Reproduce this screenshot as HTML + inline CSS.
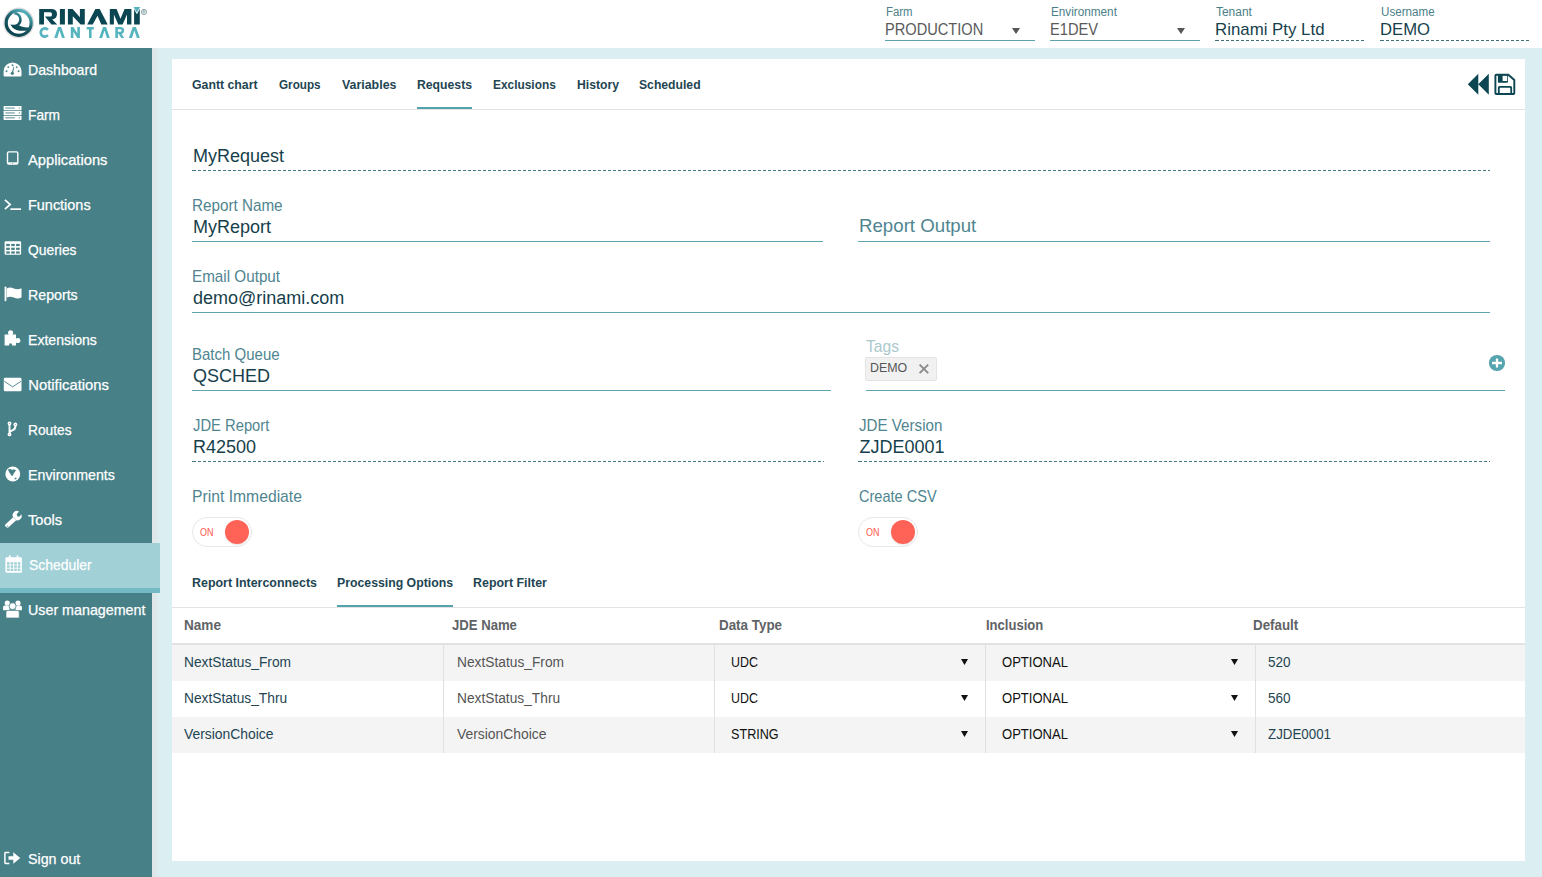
<!DOCTYPE html>
<html><head><meta charset="utf-8">
<style>
*{box-sizing:border-box;margin:0;padding:0}
html,body{width:1542px;height:877px;overflow:hidden;background:#fff;font-family:"Liberation Sans",sans-serif}
.a{position:absolute;white-space:nowrap;line-height:normal}
</style></head><body>
<svg class="a" style="left:0;top:0" width="160" height="48" viewBox="0 0 160 48">
 <defs>
  <linearGradient id="rg" x1="0.75" y1="0" x2="0.25" y2="0.9">
   <stop offset="0" stop-color="#5cb8c3"/><stop offset="0.25" stop-color="#3a8c97"/><stop offset="0.5" stop-color="#1a5d68"/><stop offset="1" stop-color="#0c4551"/>
  </linearGradient>
 </defs>
 <circle cx="18.7" cy="22.9" r="15.4" fill="#e2dede"/>
 <circle cx="18.7" cy="22.9" r="10.9" fill="#fff"/>
 <circle cx="18.7" cy="22.9" r="12.5" fill="none" stroke="url(#rg)" stroke-width="3.2"/>
 <path d="M15.6 12 A7.8 7.8 0 0 1 19 25.5 Q24 27.8 28.8 27.3 L28.5 30.2 Q22 31.6 16.5 29.9 Q12 28.2 10.4 24.2 Q12.5 25 14 24.7 A5.2 5.2 0 0 0 19.2 19.5 A5.2 5.2 0 0 0 14 14.3 Q14.3 12.8 15.6 12 Z" fill="url(#rg)"/>
 <g fill="#0c4652">
  <path d="M39.2 24.5 V9 H51 Q57 9 57 14 Q57 18.5 52.3 19.6 L57.2 24.5 H51.4 L45 16.6 H50.3 Q52 16.6 52 14.4 Q52 12.3 50.3 12.3 H44 V24.5 Z"/>
  <rect x="59.9" y="9" width="5" height="15.5"/>
  <path d="M67.9 24.5 V9 H72.6 L79.9 17.3 V9 H84.8 V24.5 H80.6 L72.8 16.2 V24.5 Z"/>
  <path d="M87.2 24.5 L95.4 9 H99.7 L107.7 24.5 H101.3 L97.5 15.7 L92.7 24.5 Z"/>
  <path d="M109.8 24.5 V9 H116.6 L120.5 18.7 L124.6 9 H131.4 V24.5 H127 V14.5 L122.6 24.5 H118.3 L113.9 14.5 V24.5 Z"/>
  <rect x="134.1" y="9" width="5.7" height="15.5"/>
 </g>
 <path d="M132.5 6.5 H141.3 L136.9 14.2 Z" fill="#fff"/>
 <path d="M133.6 7 H140.2 L136.9 12.6 Z" fill="#55b3be"/>
 <circle cx="144" cy="12" r="2.6" fill="none" stroke="#6d8f95" stroke-width="0.8"/><path d="M143.1 13.6 V10.5 H144.4 Q145.2 10.5 145.2 11.3 Q145.2 12.1 144.4 12.1 H143.1 M144.2 12.1 L145.2 13.6" fill="none" stroke="#6d8f95" stroke-width="0.6"/>
 <g fill="#56b4bf">
  <path d="M47.9 29.8 A4.1 4.1 0 1 0 47.9 35.2" fill="none" stroke="#56b4bf" stroke-width="2.6"/>
  <path d="M54.2 37.9 L58 27.1 H61.2 L64.9 37.9 H62 L59.6 30.5 L57.2 37.9 Z"/>
  <path d="M70.8 37.9 V27.1 H73.4 L77.3 33.2 V27.1 H79.9 V37.9 H77.3 L73.4 31.8 V37.9 Z"/>
  <path d="M86.7 27.1 H93.8 V29.6 H91.6 V37.9 H89 V29.6 H86.7 Z"/>
  <path d="M99.2 37.9 L103 27.1 H106.1 L109.8 37.9 H106.9 L104.5 30.5 L102.1 37.9 Z"/>
  <path fill-rule="evenodd" d="M115.3 37.9 V27.1 H120.5 Q124.2 27.1 124.2 30.6 Q124.2 33.2 121.6 33.9 L124.2 37.9 H121.2 L118.6 33.7 H117.9 V37.9 Z M117.9 29.3 H120.3 Q121.6 29.3 121.6 30.6 Q121.6 31.8 120.3 31.8 H117.9 Z"/>
  <path d="M128.9 37.9 L132.7 27.1 H135.9 L139.8 37.9 H136.9 L134.4 30.5 L132 37.9 Z"/>
 </g>
</svg>
<div class="a" style="left:885.70px;top:5.04px;font-size:12px;color:#4b8088;transform:scaleX(0.9464);transform-origin:0 0;">Farm</div>
<div class="a" style="left:884.70px;top:21.32px;font-size:16px;color:#5a5a5a;transform:scaleX(0.9140);transform-origin:0 0;">PRODUCTION</div>
<svg class="a" style="left:1012px;top:28px" width="8" height="6"><path d="M0 0 H8 L4.0 6 Z" fill="#555"/></svg>
<div class="a" style="left:885px;top:40px;width:150px;height:1px;background:#5fa3ad;"></div>
<div class="a" style="left:1050.70px;top:5.04px;font-size:12px;color:#4b8088;transform:scaleX(0.9785);transform-origin:0 0;">Environment</div>
<div class="a" style="left:1049.70px;top:21.32px;font-size:16px;color:#5a5a5a;transform:scaleX(0.9171);transform-origin:0 0;">E1DEV</div>
<svg class="a" style="left:1177px;top:28px" width="8" height="6"><path d="M0 0 H8 L4.0 6 Z" fill="#555"/></svg>
<div class="a" style="left:1050px;top:40px;width:150px;height:1px;background:#5fa3ad;"></div>
<div class="a" style="left:1215.70px;top:5.04px;font-size:12px;color:#4b8088;transform:scaleX(0.9958);transform-origin:0 0;">Tenant</div>
<div class="a" style="left:1215.40px;top:20.11px;font-size:17px;color:#173f4b;transform:scaleX(0.9905);transform-origin:0 0;">Rinami Pty Ltd</div>
<div class="a" style="left:1215px;top:40px;width:150px;height:1px;background:linear-gradient(#3f6f78,#3f6f78) 0 0/1px 1px no-repeat,repeating-linear-gradient(to right,#3f6f78 0,#3f6f78 3px,transparent 3px,transparent 5px) 1px 0/100% 1px repeat-x"></div>
<div class="a" style="left:1380.70px;top:5.04px;font-size:12px;color:#4b8088;transform:scaleX(0.9684);transform-origin:0 0;">Username</div>
<div class="a" style="left:1380.40px;top:20.11px;font-size:17px;color:#173f4b;transform:scaleX(0.9804);transform-origin:0 0;">DEMO</div>
<div class="a" style="left:1380px;top:40px;width:150px;height:1px;background:linear-gradient(#3f6f78,#3f6f78) 0 0/1px 1px no-repeat,repeating-linear-gradient(to right,#3f6f78 0,#3f6f78 3px,transparent 3px,transparent 5px) 1px 0/100% 1px repeat-x"></div>
<div class="a" style="left:152px;top:48px;width:1390px;height:829px;background:#dbeff2;"></div>
<div class="a" style="left:152px;top:48px;width:7px;height:829px;background:linear-gradient(to right,#dfe5e7,#dde9ec 70%,#dbeff2);"></div>
<div class="a" style="left:0px;top:48px;width:152px;height:829px;background:#478087;"></div>
<div class="a" style="left:0px;top:543px;width:160px;height:45px;background:#a1d0d6;"></div>
<div class="a" style="left:0px;top:588px;width:160px;height:5px;background:#74b9c3;"></div>
<div class="a" style="left:172px;top:59px;width:1353px;height:802px;background:#fff;"></div>
<div class="a" style="left:28.30px;top:61.70px;font-size:14.8px;color:#fff;transform:scaleX(0.9530);transform-origin:0 0;-webkit-text-stroke:0.25px #fff;">Dashboard</div>
<div class="a" style="left:28.30px;top:106.70px;font-size:14.8px;color:#fff;transform:scaleX(0.9291);transform-origin:0 0;-webkit-text-stroke:0.25px #fff;">Farm</div>
<div class="a" style="left:28.30px;top:151.70px;font-size:14.8px;color:#fff;transform:scaleX(0.9962);transform-origin:0 0;-webkit-text-stroke:0.25px #fff;">Applications</div>
<div class="a" style="left:28.30px;top:196.70px;font-size:14.8px;color:#fff;transform:scaleX(0.9758);transform-origin:0 0;-webkit-text-stroke:0.25px #fff;">Functions</div>
<div class="a" style="left:28.30px;top:241.70px;font-size:14.8px;color:#fff;transform:scaleX(0.9363);transform-origin:0 0;-webkit-text-stroke:0.25px #fff;">Queries</div>
<div class="a" style="left:28.30px;top:286.70px;font-size:14.8px;color:#fff;transform:scaleX(0.9595);transform-origin:0 0;-webkit-text-stroke:0.25px #fff;">Reports</div>
<div class="a" style="left:28.30px;top:331.70px;font-size:14.8px;color:#fff;transform:scaleX(0.9517);transform-origin:0 0;-webkit-text-stroke:0.25px #fff;">Extensions</div>
<div class="a" style="left:28.30px;top:376.70px;font-size:14.8px;color:#fff;transform:scaleX(1.0000);transform-origin:0 0;-webkit-text-stroke:0.25px #fff;">Notifications</div>
<div class="a" style="left:28.30px;top:421.70px;font-size:14.8px;color:#fff;transform:scaleX(0.9296);transform-origin:0 0;-webkit-text-stroke:0.25px #fff;">Routes</div>
<div class="a" style="left:28.30px;top:466.70px;font-size:14.8px;color:#fff;transform:scaleX(0.9602);transform-origin:0 0;-webkit-text-stroke:0.25px #fff;">Environments</div>
<div class="a" style="left:28.30px;top:511.70px;font-size:14.8px;color:#fff;transform:scaleX(0.9899);transform-origin:0 0;-webkit-text-stroke:0.25px #fff;">Tools</div>
<div class="a" style="left:29.30px;top:556.70px;font-size:14.8px;color:#fff;transform:scaleX(0.9407);transform-origin:0 0;-webkit-text-stroke:0.25px #fff;">Scheduler</div>
<div class="a" style="left:28.30px;top:601.70px;font-size:14.8px;color:#fff;transform:scaleX(0.9651);transform-origin:0 0;-webkit-text-stroke:0.25px #fff;">User management</div>
<div class="a" style="left:28.30px;top:851.20px;font-size:14.8px;color:#fff;transform:scaleX(0.9632);transform-origin:0 0;-webkit-text-stroke:0.25px #fff;">Sign out</div>
<svg class="a" style="left:0;top:0" width="30" height="877" viewBox="0 0 30 877">
 <g fill="#fff">
  <!-- dashboard -->
  <path d="M3.6 75.6 Q3.6 76.4 4.4 76.4 H20.7 Q21.5 76.4 21.5 75.6 V71.4 A8.95 9 0 0 0 3.6 71.4 Z"/>
  <!-- farm -->
  <rect x="3.6" y="105.9" width="17.9" height="4.2" rx="0.5"/>
  <rect x="3.6" y="110.8" width="17.9" height="4.2" rx="0.5"/>
  <rect x="3.6" y="115.7" width="17.9" height="4.2" rx="0.5"/>
  <!-- functions -->
  <rect x="10.4" y="208.3" width="10.6" height="1.7"/>
  <!-- queries -->
  <rect x="4.6" y="241.2" width="16.5" height="13.6" rx="1.2"/>
  <!-- reports -->
  <rect x="4.6" y="286.5" width="1.8" height="14.7" rx="0.8"/>
  <path d="M6.6 288.4 Q10 286.6 13.8 288.4 Q17.6 290 21.5 288.2 V297.6 Q17.6 299.4 13.8 297.6 Q10 296 6.6 297.6 Z"/>
  <!-- extensions -->
  <path d="M4.6 334.5 H8.9 Q8 333.9 8 332.8 A2.6 2.6 0 0 1 13.2 332.8 Q13.2 333.9 12.3 334.5 H16 V338.6 Q16.6 338 17.9 338 A2.5 2.5 0 0 1 17.9 343 Q16.6 343 16 342.4 V345.6 H12.1 Q12.3 343.2 10.6 343.2 Q8.9 343.2 9.1 345.6 H4.6 Z"/>
  <!-- notifications -->
  <rect x="3.8" y="377.7" width="17.7" height="13.5" rx="1.3"/>
  <!-- environments -->
  <circle cx="12.8" cy="474" r="7.4"/>
  <!-- tools -->
  <path d="M5.6 524.3 L13.2 517.3 L16.2 520.2 L8.6 527.3 Q7.4 528.2 6.2 527.1 L5.3 526.2 Q4.5 525.2 5.6 524.3 Z"/>
  <path d="M13.2 517.3 A4.3 4.3 0 0 1 19 511.4 L16.8 513.9 L17.1 516.3 L19.4 516.7 L21.3 514.2 A4.3 4.3 0 0 1 16.2 520.2 Z"/>
  <!-- scheduler -->
  <rect x="5.4" y="557.3" width="16.5" height="15.5" rx="1.2"/>
  <rect x="8.8" y="555.2" width="1.9" height="4" rx="0.9"/>
  <rect x="16.6" y="555.2" width="1.9" height="4" rx="0.9"/>
  <!-- users -->
  <circle cx="7.3" cy="603" r="2.6"/>
  <circle cx="18" cy="603" r="2.6"/>
  <path d="M3.1 610.2 V607.3 Q3.1 605.6 4.8 605.6 H9.5 V610.2 Z"/>
  <path d="M21.9 610.2 V607.3 Q21.9 605.6 20.2 605.6 H15.5 V610.2 Z"/>
  <circle cx="12.6" cy="606.2" r="3.5" stroke="#478087" stroke-width="0.8"/>
  <path d="M6 617.9 V612.2 Q6 610.4 7.8 610.4 H17.4 Q19.2 610.4 19.2 612.2 V617.9 Z" stroke="#478087" stroke-width="0.6"/>
  <!-- sign out -->
  <path d="M8.5 856.3 H13.3 V852.2 L20.2 858 L13.3 863.8 V859.7 H8.5 Z"/>
 </g>
 <g fill="#478087">
  <circle cx="6.5" cy="71.2" r="0.95"/><circle cx="8.3" cy="67.1" r="0.95"/><circle cx="12.55" cy="65.3" r="0.95"/><circle cx="16.8" cy="67.1" r="0.95"/><circle cx="18.6" cy="71.2" r="0.95"/>
  <circle cx="12.3" cy="73.3" r="1.6"/>
  <path d="M11.6 73 L13.6 66.8 L14.2 67 L13 73.5 Z"/>
  <rect x="5.3" y="107.6" width="9.5" height="0.9"/><rect x="5.3" y="112.5" width="9.5" height="0.9"/><rect x="5.3" y="117.4" width="9.5" height="0.9"/>
  <circle cx="19.3" cy="108" r="0.6"/><circle cx="19.3" cy="112.9" r="0.6"/><circle cx="19.3" cy="117.8" r="0.6"/>
  <rect x="6.2" y="243.9" width="3.6" height="2.2"/><rect x="11.2" y="243.9" width="3.6" height="2.2"/><rect x="16.1" y="243.9" width="3.6" height="2.2"/>
  <rect x="6.2" y="247.7" width="3.6" height="2.2"/><rect x="11.2" y="247.7" width="3.6" height="2.2"/><rect x="16.1" y="247.7" width="3.6" height="2.2"/>
  <rect x="6.2" y="251.4" width="3.6" height="2.2"/><rect x="11.2" y="251.4" width="3.6" height="2.2"/><rect x="16.1" y="251.4" width="3.6" height="2.2"/>
  <path d="M7.9 469.6 Q9.5 468.8 11.3 469.3 L12.3 470.3 L13.3 469.2 Q14.8 469.6 16.1 470 L14.5 472.5 Q13.5 473.5 13.2 474.8 L12.2 476.3 Q10.8 474.5 9.3 472.5 Z"/>
  <path d="M14.3 478.9 L15.2 477.5 L17 478.4 L15 479.6 Z"/>
  <circle cx="7.7" cy="526.1" r="0.6"/>
  <rect x="7.0" y="562.2" width="2.6" height="2.4" fill="#a1d0d6"/><rect x="10.6" y="562.2" width="2.6" height="2.4" fill="#a1d0d6"/><rect x="14.2" y="562.2" width="2.6" height="2.4" fill="#a1d0d6"/><rect x="17.8" y="562.2" width="2.6" height="2.4" fill="#a1d0d6"/><rect x="7.0" y="565.4" width="2.6" height="2.4" fill="#a1d0d6"/><rect x="10.6" y="565.4" width="2.6" height="2.4" fill="#a1d0d6"/><rect x="14.2" y="565.4" width="2.6" height="2.4" fill="#a1d0d6"/><rect x="17.8" y="565.4" width="2.6" height="2.4" fill="#a1d0d6"/><rect x="7.0" y="568.6" width="2.6" height="2.4" fill="#a1d0d6"/><rect x="10.6" y="568.6" width="2.6" height="2.4" fill="#a1d0d6"/><rect x="14.2" y="568.6" width="2.6" height="2.4" fill="#a1d0d6"/><rect x="17.8" y="568.6" width="2.6" height="2.4" fill="#a1d0d6"/>
 </g>
 <g fill="none" stroke="#fff">
  <rect x="7.5" y="151.9" width="10.3" height="12.2" rx="1.3" stroke-width="1.4"/>
  <path d="M4.9 199.9 L10.2 204.5 L4.9 209.1" stroke-width="1.7"/>
  <path d="M4.3 381.3 L12.65 386.8 L21 381.3" stroke="#478087" stroke-width="0.9"/>
  <path d="M9.5 425 V433 M15.4 426 Q15.4 429.6 12.4 430.4 Q9.5 431.2 9.5 433" stroke-width="1.9"/>
  <circle cx="9.5" cy="423.5" r="1.9" fill="#fff" stroke="none"/><circle cx="15.4" cy="424.5" r="1.9" fill="#fff" stroke="none"/><circle cx="9.5" cy="434.4" r="1.9" fill="#fff" stroke="none"/>
  <circle cx="9.5" cy="423.5" r="0.45" fill="#7a5a6a" stroke="none"/><circle cx="15.4" cy="424.5" r="0.45" fill="#7a5a6a" stroke="none"/><circle cx="9.5" cy="434.4" r="0.45" fill="#7a5a6a" stroke="none"/>
  <path d="M9.3 852.5 H5.6 Q4.9 852.5 4.9 853.2 V862.8 Q4.9 863.5 5.6 863.5 H9.3" stroke-width="1.5"/>
 </g>
 <rect x="7.5" y="162.3" width="10.3" height="1.8" fill="#fff"/>
 <circle cx="12.65" cy="163.2" r="0.5" fill="#478087"/>
 <circle cx="9.6" cy="345.6" r="0" fill="#478087"/>
</svg>

<div class="a" style="left:192.40px;top:77.31px;font-size:12.8px;color:#1e4552;font-weight:bold;transform:scaleX(0.9605);transform-origin:0 0;">Gantt chart</div>
<div class="a" style="left:279.00px;top:77.31px;font-size:12.8px;color:#1e4552;font-weight:bold;transform:scaleX(0.9143);transform-origin:0 0;">Groups</div>
<div class="a" style="left:341.60px;top:77.31px;font-size:12.8px;color:#1e4552;font-weight:bold;transform:scaleX(0.9680);transform-origin:0 0;">Variables</div>
<div class="a" style="left:417.00px;top:77.31px;font-size:12.8px;color:#1e4552;font-weight:bold;transform:scaleX(0.9549);transform-origin:0 0;">Requests</div>
<div class="a" style="left:492.80px;top:77.31px;font-size:12.8px;color:#1e4552;font-weight:bold;transform:scaleX(0.9290);transform-origin:0 0;">Exclusions</div>
<div class="a" style="left:576.70px;top:77.31px;font-size:12.8px;color:#1e4552;font-weight:bold;transform:scaleX(0.9546);transform-origin:0 0;">History</div>
<div class="a" style="left:639.40px;top:77.31px;font-size:12.8px;color:#1e4552;font-weight:bold;transform:scaleX(0.9514);transform-origin:0 0;">Scheduled</div>
<div class="a" style="left:172px;top:109px;width:1353px;height:1px;background:#e3e3e3;"></div>
<div class="a" style="left:417px;top:107px;width:55px;height:2px;background:#53a2ac;"></div>
<svg class="a" style="left:0;top:0" width="1542" height="120" viewBox="0 0 1542 120">
 <path d="M1467.8 84.3 L1478.3 73.8 V94.8 Z M1478.3 84.3 L1488.8 73.8 V94.8 Z" fill="#0c4652"/>
 <path d="M1495.4 75.6 Q1495.4 74.8 1496.2 74.8 H1508.3 L1514.3 80 V93.2 Q1514.3 94 1513.5 94 H1496.2 Q1495.4 94 1495.4 93.2 Z" fill="none" stroke="#0c4652" stroke-width="1.9"/>
 <path d="M1497.9 74.5 H1507.9 V82 Q1507.9 82.8 1507.1 82.8 H1498.7 Q1497.9 82.8 1497.9 82 Z M1502.6 75.6 V81 H1507.1 V75.6 Z" fill="#0c4652" fill-rule="evenodd"/>
 <path d="M1498.8 94 V87.6 Q1498.8 86.8 1499.6 86.8 H1510.4 Q1511.2 86.8 1511.2 87.6 V94" fill="none" stroke="#0c4652" stroke-width="1.8"/>
</svg>

<div class="a" style="left:193.00px;top:145.90px;font-size:18px;color:#173f4b;">MyRequest</div>
<div class="a" style="left:192px;top:170px;width:1298px;height:1px;background:linear-gradient(#3f7a84,#3f7a84) 0 0/1px 1px no-repeat,repeating-linear-gradient(to right,#3f7a84 0,#3f7a84 3px,transparent 3px,transparent 5px) 1px 0/100% 1px repeat-x"></div>
<div class="a" style="left:192.30px;top:195.87px;font-size:16.6px;color:#4f8590;transform:scaleX(0.9179);transform-origin:0 0;">Report Name</div>
<div class="a" style="left:193.00px;top:216.90px;font-size:18px;color:#173f4b;">MyReport</div>
<div class="a" style="left:192px;top:241px;width:631px;height:1px;background:#5fa5af;"></div>
<div class="a" style="left:858.50px;top:215.40px;font-size:19px;color:#4f8590;transform:scaleX(0.9828);transform-origin:0 0;">Report Output</div>
<div class="a" style="left:858px;top:241px;width:632px;height:1px;background:#5fa5af;"></div>
<div class="a" style="left:192.20px;top:266.87px;font-size:16.6px;color:#4f8590;transform:scaleX(0.9182);transform-origin:0 0;">Email Output</div>
<div class="a" style="left:193.00px;top:288.10px;font-size:18px;color:#173f4b;">demo@rinami.com</div>
<div class="a" style="left:192px;top:312px;width:1298px;height:1px;background:#5fa5af;"></div>
<div class="a" style="left:192.20px;top:345.17px;font-size:16.6px;color:#4f8590;transform:scaleX(0.9040);transform-origin:0 0;">Batch Queue</div>
<div class="a" style="left:193.00px;top:366.00px;font-size:18px;color:#173f4b;">QSCHED</div>
<div class="a" style="left:192px;top:390px;width:639px;height:1px;background:#5fa5af;"></div>
<div class="a" style="left:865.50px;top:336.97px;font-size:16.6px;color:#a9c8cd;transform:scaleX(0.9415);transform-origin:0 0;">Tags</div>
<div class="a" style="left:865px;top:357px;width:72px;height:24px;background:#f1f1f1;border:1px solid #e4e4e4;border-radius:2px"></div>
<div class="a" style="left:870.00px;top:361.48px;font-size:12.5px;color:#555;transform:scaleX(0.9920);transform-origin:0 0;">DEMO</div>
<svg class="a" style="left:918px;top:363px" width="12" height="12"><path d="M1.6 1.6 L10.2 10.2 M10.2 1.6 L1.6 10.2" stroke="#8a8a8a" stroke-width="1.9"/></svg>
<div class="a" style="left:866px;top:390px;width:639px;height:1px;background:#5fa5af;"></div>
<svg class="a" style="left:1488px;top:354px" width="18" height="18"><circle cx="9" cy="9" r="8.1" fill="#56a4af"/><path d="M4 9 H14 M9 4.5 V13.5" stroke="#fff" stroke-width="2.3"/></svg>
<div class="a" style="left:192.50px;top:416.27px;font-size:16.6px;color:#4f8590;transform:scaleX(0.8904);transform-origin:0 0;">JDE Report</div>
<div class="a" style="left:193.00px;top:437.10px;font-size:18px;color:#173f4b;">R42500</div>
<div class="a" style="left:192px;top:461px;width:632px;height:1px;background:linear-gradient(#3f7a84,#3f7a84) 0 0/1px 1px no-repeat,repeating-linear-gradient(to right,#3f7a84 0,#3f7a84 3px,transparent 3px,transparent 5px) 1px 0/100% 1px repeat-x"></div>
<div class="a" style="left:858.60px;top:416.27px;font-size:16.6px;color:#4f8590;transform:scaleX(0.9130);transform-origin:0 0;">JDE Version</div>
<div class="a" style="left:859.50px;top:437.10px;font-size:18px;color:#173f4b;">ZJDE0001</div>
<div class="a" style="left:858px;top:461px;width:632px;height:1px;background:linear-gradient(#3f7a84,#3f7a84) 0 0/1px 1px no-repeat,repeating-linear-gradient(to right,#3f7a84 0,#3f7a84 3px,transparent 3px,transparent 5px) 1px 0/100% 1px repeat-x"></div>
<div class="a" style="left:192.00px;top:487.27px;font-size:16.6px;color:#4f8590;transform:scaleX(0.9462);transform-origin:0 0;">Print Immediate</div>
<div class="a" style="left:858.60px;top:487.27px;font-size:16.6px;color:#4f8590;transform:scaleX(0.8775);transform-origin:0 0;">Create CSV</div>
<div class="a" style="left:192px;top:517px;width:60px;height:30px;background:#fff;border:1px solid #e8e8e8;border-radius:15px"></div>
<div class="a" style="left:225px;top:520px;width:24px;height:24px;border-radius:50%;background:#ff6257;box-shadow:0 1px 2px rgba(0,0,0,.10)"></div>
<div class="a" style="left:200.10px;top:525.59px;font-size:10.5px;color:#ff5a4e;transform:scaleX(0.8571);transform-origin:0 0;">ON</div>
<div class="a" style="left:858px;top:517px;width:60px;height:30px;background:#fff;border:1px solid #e8e8e8;border-radius:15px"></div>
<div class="a" style="left:891px;top:520px;width:24px;height:24px;border-radius:50%;background:#ff6257;box-shadow:0 1px 2px rgba(0,0,0,.10)"></div>
<div class="a" style="left:866.10px;top:525.59px;font-size:10.5px;color:#ff5a4e;transform:scaleX(0.8571);transform-origin:0 0;">ON</div>
<div class="a" style="left:192.00px;top:575.41px;font-size:12.8px;color:#1e4552;font-weight:bold;transform:scaleX(0.9709);transform-origin:0 0;">Report Interconnects</div>
<div class="a" style="left:337.10px;top:575.41px;font-size:12.8px;color:#1e4552;font-weight:bold;transform:scaleX(0.9595);transform-origin:0 0;">Processing Options</div>
<div class="a" style="left:473.30px;top:575.41px;font-size:12.8px;color:#1e4552;font-weight:bold;transform:scaleX(0.9711);transform-origin:0 0;">Report Filter</div>
<div class="a" style="left:172px;top:607px;width:1353px;height:1px;background:#e3e3e3;"></div>
<div class="a" style="left:337px;top:604.5px;width:116px;height:2.5px;background:#53a2ac;"></div>
<div class="a" style="left:184.00px;top:617.33px;font-size:14px;color:#5f6366;font-weight:bold;transform:scaleX(0.9699);transform-origin:0 0;">Name</div>
<div class="a" style="left:452.00px;top:617.33px;font-size:14px;color:#5f6366;font-weight:bold;transform:scaleX(0.9372);transform-origin:0 0;">JDE Name</div>
<div class="a" style="left:718.70px;top:617.33px;font-size:14px;color:#5f6366;font-weight:bold;transform:scaleX(0.9567);transform-origin:0 0;">Data Type</div>
<div class="a" style="left:986.00px;top:617.33px;font-size:14px;color:#5f6366;font-weight:bold;transform:scaleX(0.9308);transform-origin:0 0;">Inclusion</div>
<div class="a" style="left:1252.80px;top:617.33px;font-size:14px;color:#5f6366;font-weight:bold;transform:scaleX(0.9526);transform-origin:0 0;">Default</div>
<div class="a" style="left:172px;top:643px;width:1353px;height:2px;background:#e2e2e2;"></div>
<div class="a" style="left:172px;top:645px;width:1353px;height:36px;background:#f4f4f4;"></div>
<div class="a" style="left:443px;top:645px;width:1px;height:36px;background:#e0e0e0;"></div>
<div class="a" style="left:714px;top:645px;width:1px;height:36px;background:#e0e0e0;"></div>
<div class="a" style="left:985px;top:645px;width:1px;height:36px;background:#e0e0e0;"></div>
<div class="a" style="left:1255px;top:645px;width:1px;height:36px;background:#e0e0e0;"></div>
<div class="a" style="left:184.30px;top:653.73px;font-size:14px;color:#1e4552;transform:scaleX(0.9826);transform-origin:0 0;">NextStatus_From</div>
<div class="a" style="left:456.50px;top:653.73px;font-size:14px;color:#555;transform:scaleX(0.9826);transform-origin:0 0;">NextStatus_From</div>
<div class="a" style="left:731.10px;top:653.73px;font-size:14px;color:#111;transform:scaleX(0.8863);transform-origin:0 0;">UDC</div>
<svg class="a" style="left:961px;top:659px" width="7" height="6"><path d="M0 0 H7 L3.5 6 Z" fill="#111"/></svg>
<div class="a" style="left:1001.60px;top:653.73px;font-size:14px;color:#111;transform:scaleX(0.9322);transform-origin:0 0;">OPTIONAL</div>
<svg class="a" style="left:1230.5px;top:659px" width="7" height="6"><path d="M0 0 H7 L3.5 6 Z" fill="#111"/></svg>
<div class="a" style="left:1268.30px;top:653.73px;font-size:14px;color:#1e4552;transform:scaleX(0.9679);transform-origin:0 0;">520</div>
<div class="a" style="left:443px;top:681px;width:1px;height:36px;background:#e0e0e0;"></div>
<div class="a" style="left:714px;top:681px;width:1px;height:36px;background:#e0e0e0;"></div>
<div class="a" style="left:985px;top:681px;width:1px;height:36px;background:#e0e0e0;"></div>
<div class="a" style="left:1255px;top:681px;width:1px;height:36px;background:#e0e0e0;"></div>
<div class="a" style="left:184.30px;top:689.73px;font-size:14px;color:#1e4552;transform:scaleX(0.9814);transform-origin:0 0;">NextStatus_Thru</div>
<div class="a" style="left:456.50px;top:689.73px;font-size:14px;color:#555;transform:scaleX(0.9814);transform-origin:0 0;">NextStatus_Thru</div>
<div class="a" style="left:731.10px;top:689.73px;font-size:14px;color:#111;transform:scaleX(0.8863);transform-origin:0 0;">UDC</div>
<svg class="a" style="left:961px;top:695px" width="7" height="6"><path d="M0 0 H7 L3.5 6 Z" fill="#111"/></svg>
<div class="a" style="left:1001.60px;top:689.73px;font-size:14px;color:#111;transform:scaleX(0.9322);transform-origin:0 0;">OPTIONAL</div>
<svg class="a" style="left:1230.5px;top:695px" width="7" height="6"><path d="M0 0 H7 L3.5 6 Z" fill="#111"/></svg>
<div class="a" style="left:1268.30px;top:689.73px;font-size:14px;color:#1e4552;transform:scaleX(0.9679);transform-origin:0 0;">560</div>
<div class="a" style="left:172px;top:717px;width:1353px;height:36px;background:#f4f4f4;"></div>
<div class="a" style="left:443px;top:717px;width:1px;height:36px;background:#e0e0e0;"></div>
<div class="a" style="left:714px;top:717px;width:1px;height:36px;background:#e0e0e0;"></div>
<div class="a" style="left:985px;top:717px;width:1px;height:36px;background:#e0e0e0;"></div>
<div class="a" style="left:1255px;top:717px;width:1px;height:36px;background:#e0e0e0;"></div>
<div class="a" style="left:184.30px;top:725.73px;font-size:14px;color:#1e4552;transform:scaleX(0.9917);transform-origin:0 0;">VersionChoice</div>
<div class="a" style="left:456.50px;top:725.73px;font-size:14px;color:#555;transform:scaleX(0.9917);transform-origin:0 0;">VersionChoice</div>
<div class="a" style="left:731.10px;top:725.73px;font-size:14px;color:#111;transform:scaleX(0.9017);transform-origin:0 0;">STRING</div>
<svg class="a" style="left:961px;top:731px" width="7" height="6"><path d="M0 0 H7 L3.5 6 Z" fill="#111"/></svg>
<div class="a" style="left:1001.60px;top:725.73px;font-size:14px;color:#111;transform:scaleX(0.9322);transform-origin:0 0;">OPTIONAL</div>
<svg class="a" style="left:1230.5px;top:731px" width="7" height="6"><path d="M0 0 H7 L3.5 6 Z" fill="#111"/></svg>
<div class="a" style="left:1268.30px;top:725.73px;font-size:14px;color:#1e4552;transform:scaleX(0.9524);transform-origin:0 0;">ZJDE0001</div>
</body></html>
